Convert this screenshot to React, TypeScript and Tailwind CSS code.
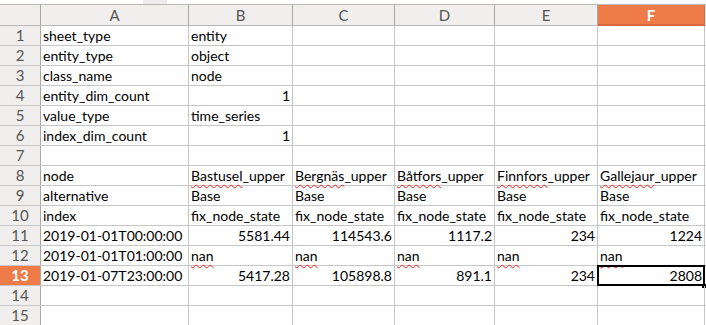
import React from 'react';

type Cell = { t: string; right?: boolean; wavy?: string };

const COLS = ['A', 'B', 'C', 'D', 'E', 'F'];
// column widths include the 1px right grid line
const WIDTHS = ['w-[148px]', 'w-[104px]', 'w-[102px]', 'w-[100px]', 'w-[103px]', 'w-[107px]'];

const names = ['Bastusel', 'Bergnäs', 'Båtfors', 'Finnfors', 'Gallejaur'];

const rows: Cell[][] = [
  [{ t: 'sheet_type' }, { t: 'entity' }],
  [{ t: 'entity_type' }, { t: 'object' }],
  [{ t: 'class_name' }, { t: 'node' }],
  [{ t: 'entity_dim_count' }, { t: '1', right: true }],
  [{ t: 'value_type' }, { t: 'time_series' }],
  [{ t: 'index_dim_count' }, { t: '1', right: true }],
  [],
  [{ t: 'node' }, ...names.map((n) => ({ t: '_upper', wavy: n }))],
  [{ t: 'alternative' }, ...names.map(() => ({ t: 'Base' }))],
  [{ t: 'index' }, ...names.map(() => ({ t: 'fix_node_state' }))],
  [
    { t: '2019-01-01T00:00:00' },
    ...['5581.44', '114543.6', '1117.2', '234', '1224'].map((v) => ({ t: v, right: true })),
  ],
  [{ t: '2019-01-01T01:00:00' }, ...names.map(() => ({ t: '', wavy: 'nan' }))],
  [
    { t: '2019-01-07T23:00:00' },
    ...['5417.28', '105898.8', '891.1', '234', '2808'].map((v) => ({ t: v, right: true })),
  ],
  [],
  [],
];

const SEL_ROW = 13;
const SEL_COL = 5;

function CellText({ cell }: { cell?: Cell }) {
  if (!cell) return null;
  return (
    <span className="whitespace-nowrap">
      {cell.wavy && (
        <span className="underline decoration-wavy decoration-[#e8231f] decoration-1 underline-offset-[3px]">
          {cell.wavy}
        </span>
      )}
      {cell.t}
    </span>
  );
}

export default function App() {
  return (
    <div
      className="w-[706px] h-[325px] overflow-hidden bg-white text-black"
      style={{ fontFamily: 'Lato, "Liberation Sans", sans-serif' }}
    >
      {/* thin strip above the column header */}
      <div className="h-[4px] flex">
        <div className="w-[143px]" />
        <div className="w-[24px] bg-[#ececec]" />
      </div>

      {/* column header */}
      <div className="flex h-[22px] border-y border-[#b8b8b8] bg-[#f0efed] text-[15px] leading-[20px]">
        <div className="w-[41px] shrink-0 border-r border-[#a8a8a8]" />
        {COLS.map((c, i) => (
          <div
            key={c}
            className={
              WIDTHS[i] +
              ' shrink-0 border-r text-center ' +
              (i === SEL_COL
                ? 'bg-[#ef7b48] text-white font-bold border-[#d9693c] border-b-2 -mb-px'
                : 'text-[#555] border-[#a8a8a8]')
            }
          >
            {c}
          </div>
        ))}
      </div>

      {/* data rows */}
      {rows.map((row, r) => {
        const num = r + 1;
        const selRow = num === SEL_ROW;
        return (
          <div key={num} className="flex h-[20px] border-b border-[#c6c6c6] text-[14px] leading-[19px]">
            <div
              className={
                'w-[41px] shrink-0 border-r border-[#a8a8a8] text-center text-[15px] ' +
                (selRow ? 'bg-[#ef7b48] text-white font-bold' : 'bg-[#f0efed] text-[#555]')
              }
            >
              {num}
            </div>
            {COLS.map((c, i) => {
              const cell = row[i];
              const selected = selRow && i === SEL_COL;
              return (
                <div
                  key={c}
                  className={
                    WIDTHS[i] +
                    ' shrink-0 relative border-r border-[#c6c6c6] px-[2px] ' +
                    (cell?.right ? 'text-right' : 'text-left')
                  }
                >
                  <CellText cell={cell} />
                  {selected && (
                    <>
                      <div className="absolute -left-px -top-px -right-px -bottom-px border-2 border-black" />
                      <div className="absolute -right-[2px] -bottom-[3px] w-[4px] h-[4px] bg-black" />
                    </>
                  )}
                </div>
              );
            })}
          </div>
        );
      })}
    </div>
  );
}
